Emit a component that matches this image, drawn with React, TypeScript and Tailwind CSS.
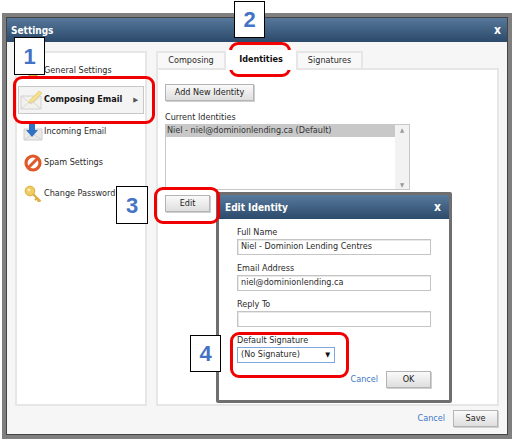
import type { ReactNode } from 'react';

const bar = 'bg-gradient-to-b from-[#587a9c] to-[#2c4a6b]';
const btn =
  'flex items-center justify-center border border-[#b4b4b4] bg-gradient-to-b from-[#fafafa] to-[#dedede] text-[#222] shadow-[1px_1px_0_#cfcfcf]';

function MailPencil() {
  return (
    <svg width="24" height="20" viewBox="0 0 24 20">
      <path d="M1 6h20v13H1z" fill="#f3f1ec" stroke="#d2d2d2" />
      <path d="M1 19l8-7M21 19l-8-7M1 6l10 8 10-8" fill="none" stroke="#d6d6d6" />
      <path d="M9 13l1-3L19 1l3 2-9 9z" fill="#f5e08e" stroke="#e0c25a" strokeWidth="0.6" />
    </svg>
  );
}

function MailArrow() {
  return (
    <svg width="20" height="18" viewBox="0 0 20 18">
      <path d="M1 6h18v11H1z" fill="#eceae6" stroke="#cdcdcd" />
      <path d="M1 17l9-6 9 6" fill="none" stroke="#d2d2d2" />
      <path d="M6 0h6v7h3l-6 7-6-7h3z" fill="#2f73c4" />
    </svg>
  );
}

function NoEntry() {
  return (
    <svg width="18" height="18" viewBox="0 0 18 18">
      <circle cx="9" cy="9" r="7" fill="#fff" stroke="#e0592a" strokeWidth="3.2" />
      <path d="M4 14L14 4" stroke="#e0592a" strokeWidth="3" />
    </svg>
  );
}

function Key() {
  return (
    <svg width="18" height="18" viewBox="0 0 18 18">
      <circle cx="6" cy="6" r="4.8" fill="#f0cd62" stroke="#dcae3c" />
      <circle cx="5" cy="5" r="1.3" fill="#fff3c4" />
      <path d="M9 9l7.5 7.5M13 13l-2 2M15 15l-1.5 1.5" fill="none" stroke="#dcae3c" strokeWidth="2.2" />
    </svg>
  );
}

function Gear() {
  return (
    <svg width="18" height="18" viewBox="0 0 18 18">
      <circle cx="9" cy="9" r="6" fill="#e3b54a" stroke="#c8962e" />
    </svg>
  );
}

function NavItem({ icon, label }: { icon: ReactNode; label: string }) {
  return (
    <div className="flex h-[31px] items-center pl-[4px]">
      <span className="flex w-[23px] shrink-0 justify-center">{icon}</span>
      <span className="whitespace-nowrap">{label}</span>
    </div>
  );
}

function Field({ label, value }: { label: string; value?: string }) {
  return (
    <div className="flex flex-col">
      <span className="h-[14px] leading-[14px]">{label}</span>
      <div className="flex h-[16px] w-[194px] items-center border border-[#c4c4c4] pl-[3px] shadow-[inset_1px_1px_0_#e8e8e8]">
        {value}
      </div>
    </div>
  );
}

function Callout({ n, className }: { n: string; className: string }) {
  return (
    <div
      className={`absolute flex items-center justify-center border border-black bg-white font-['Liberation_Sans',sans-serif] text-[22px] font-bold text-[#4472c4] ${className}`}
    >
      {n}
    </div>
  );
}

function Ring({ className }: { className: string }) {
  return <div className={`absolute rounded-[9px] border-[3px] border-[#f00000] ${className}`} />;
}

export default function App() {
  return (
    <div className="relative h-[441px] w-[515px] overflow-hidden bg-white font-['DejaVu_Sans_Condensed','DejaVu_Sans',sans-serif] text-[9px] text-[#2a2a2a] [font-stretch:condensed]">
      <div className="ml-[2px] mt-[13px] flex h-[426px] w-[510px] flex-col border-[4px] border-[#7f7f7f] bg-[#f6f6f6] outline outline-1 -outline-offset-[5px] outline-[#444]">
        <div className={`flex h-[25px] shrink-0 items-center justify-between px-[5px] pt-[1px] text-[10px] font-bold text-white ${bar}`}>
          <span>Settings</span>
          <span className="pr-[2px] text-[12px]">x</span>
        </div>

        <div className="flex min-h-0 flex-1 gap-[9px] pl-[9px] pt-[9px]">
          <div className="h-[355px] w-[132px] border-2 border-[#e6e6e6] bg-white pt-[2px]">
            <NavItem icon={<Gear />} label="General Settings" />
            <div className="mx-[1px] mb-[2px] flex h-[28px] items-center border border-[#c8c8c8] bg-[#f4f4f4] pl-[1px] font-bold text-[#111]">
              <MailPencil />
              <span className="flex-1 whitespace-nowrap">Composing Email</span>
              <span className="mr-[5px] text-[7px] text-[#555]">▶</span>
            </div>
            <NavItem icon={<MailArrow />} label="Incoming Email" />
            <NavItem icon={<NoEntry />} label="Spam Settings" />
            <NavItem icon={<Key />} label="Change Password" />
          </div>

          <div className="flex h-[355px] w-[343px] flex-col">
            <div className="flex h-[17px] shrink-0 items-end">
              <div className="flex h-[17px] w-[70px] items-center justify-center border-2 border-b-0 border-[#e6e6e6] bg-[#f8f8f8]">
                Composing
              </div>
              <div className="z-10 mb-[-2px] flex h-[20px] w-[70px] items-center justify-center bg-white font-bold text-[#111]">
                Identities
              </div>
              <div className="flex h-[17px] w-[67px] items-center justify-center border-2 border-b-0 border-[#e6e6e6] bg-[#f8f8f8]">
                Signatures
              </div>
            </div>
            <div className="flex flex-1 flex-col border-2 border-[#e6e6e6] bg-white pl-[7px] pt-[14px]">
              <div className={`h-[17px] w-[89px] ${btn}`}>Add New Identity</div>
              <div className="mt-[9px] h-[14px] leading-[14px]">Current Identities</div>
              <div className="flex h-[66px] w-[245px] border border-[#c8c8c8]">
                <div className="flex-1">
                  <div className="flex h-[12px] items-center bg-[#c8c8c8] pl-[1px] text-[#333]">
                    Niel - niel@dominionlending.ca (Default)
                  </div>
                </div>
                <div className="flex w-[14px] flex-col items-center justify-between bg-[#f2f2f2] text-[6px] text-[#999]">
                  <span>▲</span>
                  <span>▼</span>
                </div>
              </div>
              <div className={`mt-[5px] h-[17px] w-[45px] ${btn}`}>Edit</div>
            </div>
          </div>
        </div>

        <div className="flex h-[33px] shrink-0 items-center justify-end pr-[10px]">
          <span className="mr-[8px] text-[#3b78c4]">Cancel</span>
          <div className={`h-[17px] w-[45px] ${btn}`}>Save</div>
        </div>
      </div>

      <div className="absolute left-[216px] top-[192px] flex h-[211px] w-[236px] flex-col rounded-[2px] border-[3px] border-[#6f6f6f] bg-white">
        <div className={`flex h-[24px] shrink-0 items-center justify-between px-[6px] text-[10px] font-bold text-white ${bar}`}>
          <span>Edit Identity</span>
          <span className="pr-[2px] text-[12px]">x</span>
        </div>
        <div className="flex flex-1 flex-col pl-[18px] pt-[6px]">
          <div className="flex flex-col gap-[6px]">
            <Field label="Full Name" value="Niel - Dominion Lending Centres" />
            <Field label="Email Address" value="niel@dominionlending.ca" />
            <Field label="Reply To" />
          </div>
          <span className="mt-[6px] h-[14px] leading-[14px]">Default Signature</span>
          <div className="flex h-[16px] w-[98px] items-center justify-between border border-[#7ea6e0] pl-[3px] pr-[4px]">
            <span>(No Signature)</span>
            <span className="text-[7px] text-[#111]">▼</span>
          </div>
          <div className="mt-[8px] flex w-[194px] items-center justify-end">
            <span className="mr-[8px] text-[#3b78c4]">Cancel</span>
            <div className={`h-[17px] w-[45px] ${btn}`}>OK</div>
          </div>
        </div>
      </div>

      <Ring className="left-[13px] top-[76px] h-[48px] w-[142px]" />
      <Ring className="left-[229px] top-[42px] h-[35px] w-[62px]" />
      <Ring className="left-[154px] top-[187px] h-[37px] w-[66px]" />
      <Ring className="left-[230px] top-[332px] h-[46px] w-[119px]" />
      <Callout n="1" className="left-[14px] top-[37px] h-[38px] w-[31px]" />
      <Callout n="2" className="left-[234px] top-[1px] h-[37px] w-[31px]" />
      <Callout n="3" className="left-[116px] top-[186px] h-[38px] w-[32px]" />
      <Callout n="4" className="left-[190px] top-[335px] h-[37px] w-[31px]" />
    </div>
  );
}
